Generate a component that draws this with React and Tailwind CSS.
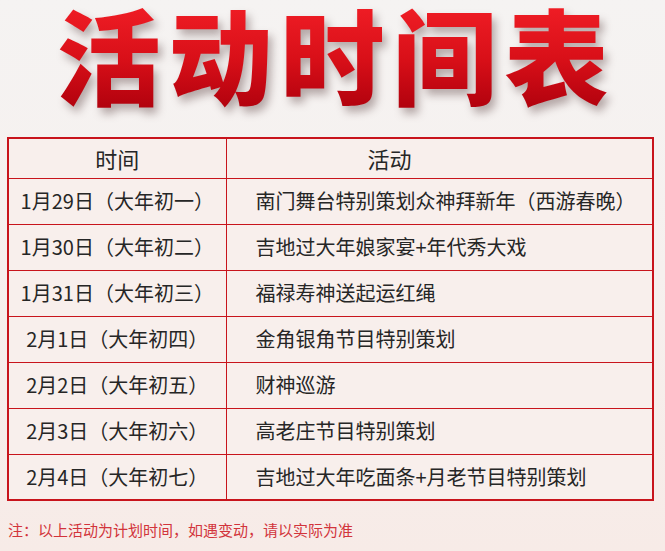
import React from 'react';

const rows = [
    { date: '1月29日（大年初一）', act: '南门舞台特别策划众神拜新年（西游春晚）' },
    { date: '1月30日（大年初二）', act: '吉地过大年娘家宴+年代秀大戏' },
    { date: '1月31日（大年初三）', act: '福禄寿神送起运红绳' },
    { date: '2月1日（大年初四）', act: '金角银角节目特别策划' },
    { date: '2月2日（大年初五）', act: '财神巡游' },
    { date: '2月3日（大年初六）', act: '高老庄节目特别策划' },
    { date: '2月4日（大年初七）', act: '吉地过大年吃面条+月老节目特别策划' },
];

const cjk = { fontFamily: '"Noto Sans CJK SC", "Noto Sans", sans-serif' };

export default function App() {
    return (
        <div className="w-[665px] h-[551px] overflow-hidden bg-gradient-to-b from-[#f5f3f2] via-[#f6f0ee] to-[#f7ebe7]" style={cjk}>
            <div className="h-[137px] flex justify-center">
                <h1 className="h-[120px] text-[104px] leading-[106px] font-black tracking-[8px] pl-[8px] text-transparent bg-clip-text bg-gradient-to-b from-[#f21e26] via-[#d80f18] to-[#a8000b] drop-shadow-[4px_6px_4px_rgba(60,30,30,0.35)]">
                    活动时间表
                </h1>
            </div>
            <div className="px-[7px]">
                <table className="w-[647px] border-collapse border-2 border-[#c8141c] bg-[#f8efec] text-[#262626] table-fixed">
                    <colgroup>
                        <col className="w-[218px]" />
                        <col />
                    </colgroup>
                    <thead>
                        <tr className="h-[40px]">
                            <th className="border-[1.5px] border-[#c8141c] text-[22px] font-normal text-center">时间</th>
                            <th className="border-[1.5px] border-[#c8141c] text-[22px] font-normal text-left pl-[141px]">活动</th>
                        </tr>
                    </thead>
                    <tbody>
                        {rows.map((r) => (
                            <tr key={r.date} className="h-[46px]">
                                <td className="border-[1.5px] border-[#c8141c] text-[20px] text-center whitespace-nowrap">{r.date}</td>
                                <td className="border-[1.5px] border-[#c8141c] text-[20px] pl-[29px] whitespace-nowrap">{r.act}</td>
                            </tr>
                        ))}
                    </tbody>
                </table>
            </div>
            <p className="mt-[18px] pl-[8px] text-[15px] text-[#d2343b]">注：以上活动为计划时间，如遇变动，请以实际为准</p>
        </div>
    );
}
